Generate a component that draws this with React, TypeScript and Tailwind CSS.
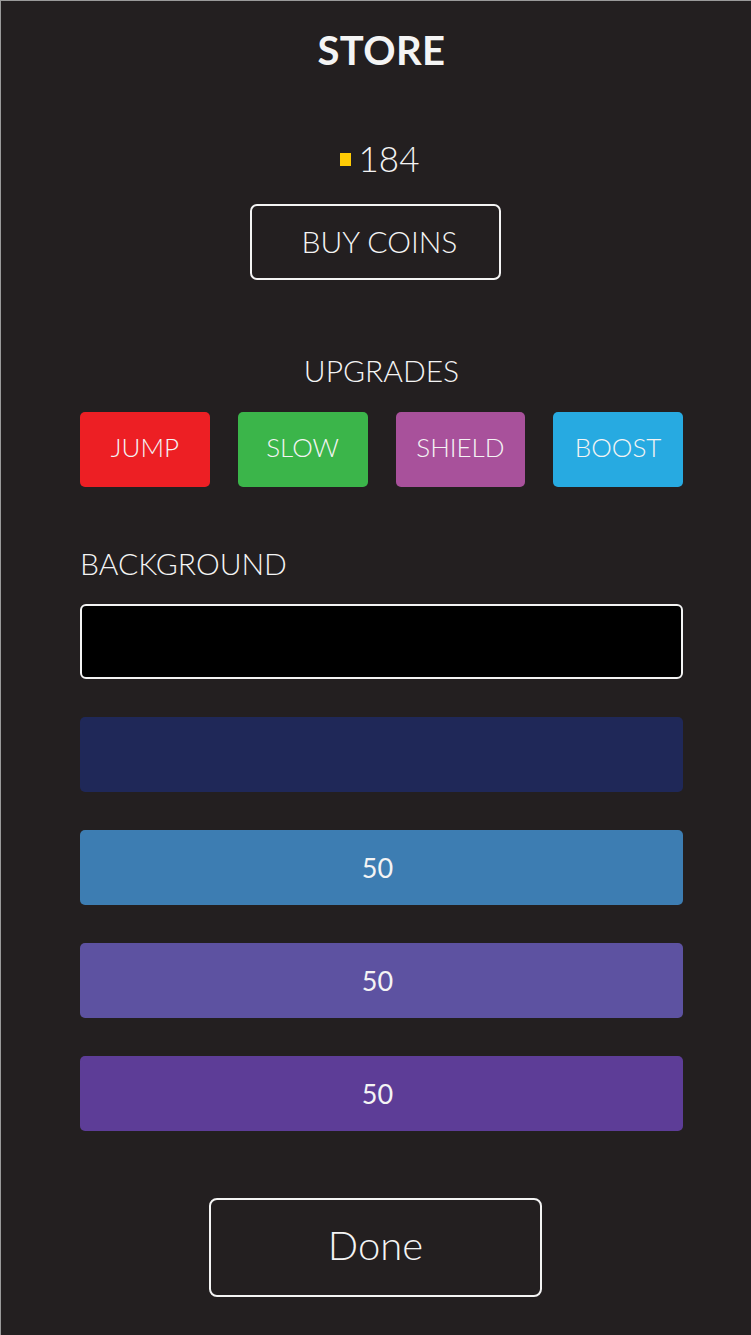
import React from "react";

const font = { fontFamily: "Lato, 'Open Sans', sans-serif" };

export default function App() {
  const upgrades = [
    { label: "JUMP", bg: "bg-[#ed1f24]" },
    { label: "SLOW", bg: "bg-[#3bb54a]" },
    { label: "SHIELD", bg: "bg-[#a8519b]" },
    { label: "BOOST", bg: "bg-[#27aae1]" },
  ];
  return (
    <div
      className="w-[751px] h-[1335px] bg-[#231f20] border-t border-l border-[#9a9a9a] text-[#f4f4f4] flex flex-col items-center pl-[79px] pr-[68px] overflow-hidden"
      style={font}
    >
      <h1 className="mt-[29px] text-[40px] font-bold leading-none tracking-[0.01em]">STORE</h1>

      <div className="mt-[71px] mr-[4px] flex items-center h-[35px]">
        <span className="w-[11px] h-[13px] bg-[#ffcb05] mr-[8px] mt-[1px]" />
        <span className="text-[35px] font-light leading-none">184</span>
      </div>

      <button className="mt-[28px] mr-[12px] w-[251px] h-[76px] border-2 border-[#f4f4f4] rounded-[7px] text-[30px] font-light leading-none flex items-center justify-center pl-[8px] pb-[2px]">
        BUY COINS
      </button>

      <h2 className="mt-[75px] text-[30px] font-light leading-none">UPGRADES</h2>

      <div className="mt-[27px] w-full grid grid-cols-4 gap-[28px]">
        {upgrades.map((u) => (
          <div
            key={u.label}
            className={`${u.bg} h-[75px] rounded-[5px] flex items-center justify-center text-[26px] font-light leading-none pb-[5px]`}
          >
            {u.label}
          </div>
        ))}
      </div>

      <h2 className="mt-[61px] self-start text-[30px] font-light leading-none">BACKGROUND</h2>

      <div className="mt-[26px] w-full flex flex-col gap-[38px]">
        <div className="h-[75px] bg-black border-2 border-[#f4f4f4] rounded-[6px]" />
        <div className="h-[75px] bg-[#1f2858] rounded-[5px]" />
        <div className="h-[75px] bg-[#3d7db2] rounded-[5px] flex items-center justify-center text-[27px] leading-none pr-[8px]">50</div>
        <div className="h-[75px] bg-[#5d52a1] rounded-[5px] flex items-center justify-center text-[27px] leading-none pr-[8px]">50</div>
        <div className="h-[75px] bg-[#5d3d97] rounded-[5px] flex items-center justify-center text-[27px] leading-none pr-[8px]">50</div>
      </div>

      <button className="mt-[67px] mr-[12px] w-[333px] h-[99px] border-2 border-[#f4f4f4] rounded-[8px] text-[40px] font-light leading-none flex items-center justify-center pb-[6px]">
        Done
      </button>
    </div>
  );
}
